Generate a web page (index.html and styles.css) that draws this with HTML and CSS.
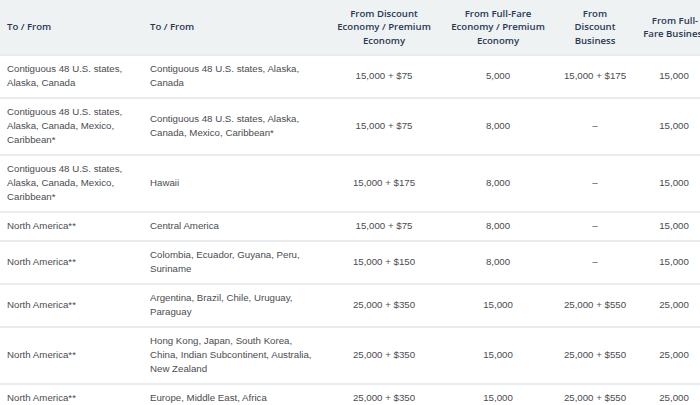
FILE: index.html
```html
<!DOCTYPE html>
<html>
<head>
<meta charset="utf-8">
<link rel="stylesheet" href="styles.css">
</head>
<body>
<div class="wrap">
<table class="award">
  <colgroup>
    <col class="c1"><col class="c2"><col class="c3"><col class="c4"><col class="c5"><col class="c6">
  </colgroup>
  <thead>
    <tr>
      <th class="left">To / From</th>
      <th class="left">To / From</th>
      <th>From Discount Economy / Premium Economy</th>
      <th>From Full-Fare Economy / Premium Economy</th>
      <th>From Discount Business</th>
      <th>From Full-Fare Business</th>
    </tr>
  </thead>
  <tbody>
    <tr><td class="left">Contiguous 48 U.S. states, Alaska, Canada</td><td class="left">Contiguous 48 U.S. states, Alaska, Canada</td><td>15,000 + $75</td><td>5,000</td><td>15,000 + $175</td><td>15,000</td></tr>
    <tr><td class="left">Contiguous 48 U.S. states, Alaska, Canada, Mexico, Caribbean*</td><td class="left">Contiguous 48 U.S. states, Alaska, Canada, Mexico, Caribbean*</td><td>15,000 + $75</td><td>8,000</td><td>–</td><td>15,000</td></tr>
    <tr><td class="left">Contiguous 48 U.S. states, Alaska, Canada, Mexico, Caribbean*</td><td class="left">Hawaii</td><td>15,000 + $175</td><td>8,000</td><td>–</td><td>15,000</td></tr>
    <tr><td class="left">North America**</td><td class="left">Central America</td><td>15,000 + $75</td><td>8,000</td><td>–</td><td>15,000</td></tr>
    <tr><td class="left">North America**</td><td class="left">Colombia, Ecuador, Guyana, Peru, Suriname</td><td>15,000 + $150</td><td>8,000</td><td>–</td><td>15,000</td></tr>
    <tr><td class="left">North America**</td><td class="left">Argentina, Brazil, Chile, Uruguay, Paraguay</td><td>25,000 + $350</td><td>15,000</td><td>25,000 + $550</td><td>25,000</td></tr>
    <tr><td class="left">North America**</td><td class="left">Hong Kong, Japan, South Korea, China, Indian Subcontinent, Australia, New Zealand</td><td>25,000 + $350</td><td>15,000</td><td>25,000 + $550</td><td>25,000</td></tr>
    <tr><td class="left">North America**</td><td class="left">Europe, Middle East, Africa</td><td>25,000 + $350</td><td>15,000</td><td>25,000 + $550</td><td>25,000</td></tr>
  </tbody>
</table>
</div>
</body>
</html>
```

FILE: styles.css
```css
html, body {
  margin: 0;
  padding: 0;
  background: #ffffff;
  overflow: hidden;
}
.wrap {
  width: 700px;
  height: 405px;
  overflow: hidden;
}
.award {
  border-collapse: collapse;
  table-layout: fixed;
  width: 713px;
}
.c1 { width: 143px; }
.c2 { width: 184px; }
.c3 { width: 114px; }
.c4 { width: 114px; }
.c5 { width: 80px; }
.c6 { width: 78px; }

.award th {
  background: #eef2f3;
  color: #293852;
  font-family: "Open Sans", "Noto Sans", sans-serif;
  font-weight: 600;
  font-size: 9.6px;
  line-height: 13.5px;
  height: 55px;
  padding: 0 6px;
  text-align: center;
  vertical-align: middle;
  box-sizing: border-box;
  border-bottom: 2px solid #e9ecee;
}
.award td {
  color: #4a4c50;
  font-family: "Liberation Sans", Arial, sans-serif;
  font-size: 9.7px;
  line-height: 14px;
  padding: 6px 6px 7px 6px;
  text-align: center;
  vertical-align: middle;
  border-bottom: 2px solid #e9ecee;
}
.award th.left,
.award td.left {
  text-align: left;
  padding-left: 7px;
}
.award th:nth-child(5) {
  padding: 0 8px;
}
.award th:nth-child(6) {
  padding: 0 5px 0 7px;
}
```
